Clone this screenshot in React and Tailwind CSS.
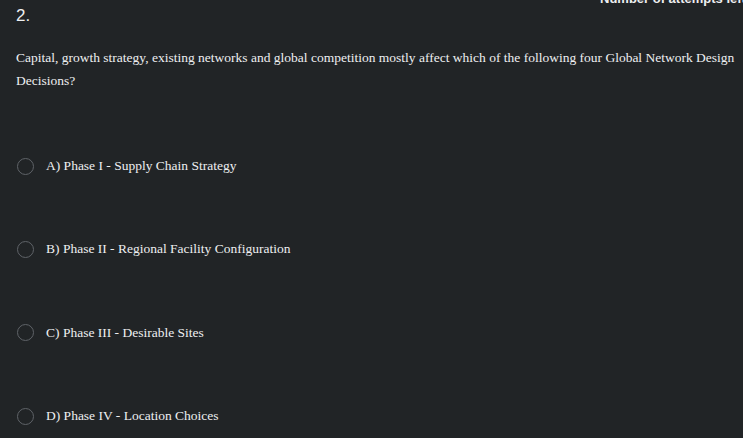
const OPTIONS = [
  'A) Phase I - Supply Chain Strategy',
  'B) Phase II - Regional Facility Configuration',
  'C) Phase III - Desirable Sites',
  'D) Phase IV - Location Choices',
]

export default function App() {
  return (
    <div className="w-[743px] h-[438px] overflow-hidden bg-[#212426] text-[#eeeff1] relative">
      <div className="absolute left-[600px] top-[-11px] text-[13px] font-bold font-['Liberation_Sans',sans-serif] whitespace-nowrap">
        Number of attempts left: 1
      </div>
      <div className="pt-[6px] pl-[16px] font-['Liberation_Sans',sans-serif] text-[17px] leading-[20px]">2.</div>
      <p className="mt-[20px] pl-[16px] pr-[6px] font-['Liberation_Serif',serif] text-[13.5px] leading-[23px]">
        Capital, growth strategy, existing networks and global competition mostly affect which of the following four Global Network Design Decisions?
      </p>
      <div className="mt-[64px] flex flex-col gap-[63.4px] font-['Liberation_Serif',serif] text-[13.5px]">
        {OPTIONS.map(o => (
          <label key={o} className="flex items-center h-[20px] pl-[17px]">
            <span className="w-[17px] h-[17px] rounded-full border-[1.5px] border-[#5f6368] shrink-0" />
            <span className="ml-[12px]">{o}</span>
          </label>
        ))}
      </div>
    </div>
  )
}
